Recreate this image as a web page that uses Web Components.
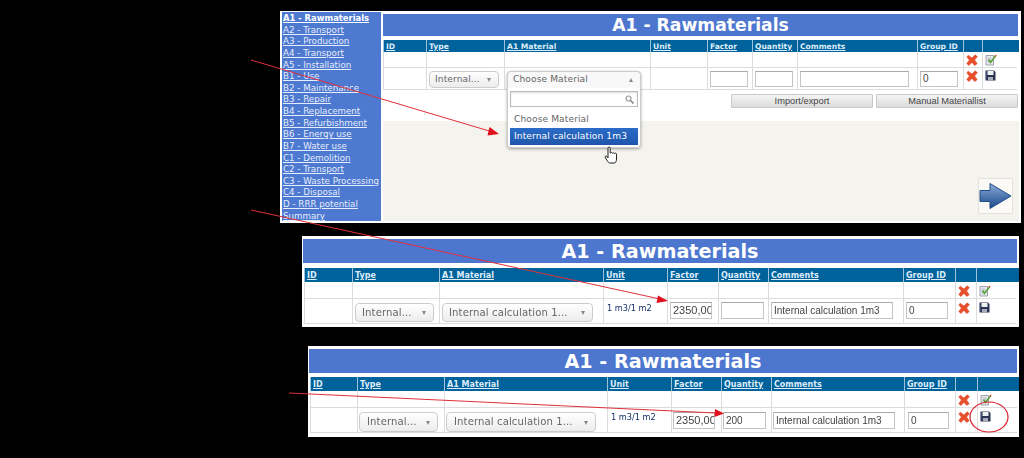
<!DOCTYPE html>
<html><head><meta charset="utf-8"><title>A1 - Rawmaterials</title>
<style>
html,body{margin:0;background:#000;width:1024px;height:458px;overflow:hidden}
body{font-family:"DejaVu Sans",sans-serif;position:relative}
</style></head><body>
<script>
const def=(name,css,html)=>{customElements.define(name,class extends HTMLElement{
  constructor(){super();this.attachShadow({mode:'open'});}
  connectedCallback(){if(this.shadowRoot.firstChild)return;this.shadowRoot.innerHTML=`<style>${css}</style>${typeof html==='function'?html(this):html}`;}
});};

def('rm-page',`:host{display:flex;flex-direction:column;align-items:flex-start;padding-top:11px;filter:blur(.35px)}`,`<slot></slot>`);

def('rm-panel',`:host{display:block;box-sizing:border-box;background:#fff;margin-left:var(--x);margin-top:var(--mt,0);width:var(--w);height:var(--h);padding:var(--pad)}`,`<slot></slot>`);

def('rm-split',`:host{display:grid;grid-template-columns:99px 636px;column-gap:2px;height:209px}`,`<slot></slot>`);

def('rm-nav',`:host{display:block;box-sizing:border-box;background:#4e79d0;padding:1px 0 0 1px;height:209px;font:8.7px/11.62px "DejaVu Sans",sans-serif}
::slotted(a){display:block;color:#e6eefc;white-space:nowrap}
::slotted(a.on){color:#fff;font-weight:bold;font-size:8.4px}`,`<slot></slot>`);

def('rm-main',`:host{display:flex;flex-direction:column;height:209px;padding-top:2px;box-sizing:border-box}
.top{background:#fff;padding-bottom:13px}
.fill{flex:1;background:#f4f3ee;display:flex;justify-content:flex-end;align-items:flex-end;padding:0 6px 7px 0}`,
`<div class="top"><slot></slot></div><div class="fill"><slot name="fill"></slot></div>`);

def('rm-title',`:host{display:flex;align-items:center;justify-content:center;box-sizing:border-box;padding-top:1px;background:#4d77cf;color:#fff;font:bold var(--ts,17.2px)/1 "DejaVu Sans",sans-serif;height:var(--th,22px);width:var(--tw,635px);margin-bottom:var(--tg,4px)}`,`<slot></slot>`);

def('rm-table',`:host{display:block;margin-left:var(--tx,0)}`,`<slot></slot>`);

def('rm-row',`:host{display:grid;grid-template-columns:var(--cols);height:var(--rh,16px);box-sizing:border-box}
:host([head]){background:#00629b;height:var(--hh,12px);font:bold var(--hs,8px)/1 "DejaVu Sans",sans-serif;color:#dcecfa;text-decoration:underline}
:host([last]){height:var(--lh,22px)}`,`<slot></slot>`);

def('rm-cell',`:host{display:flex;box-sizing:border-box;align-items:flex-start;border-left:1px solid #dcdcdc;border-bottom:1px solid #dcdcdc;padding:var(--cp,2px 0 0 2px);min-width:0;color:#10306a;font-size:var(--us,8px);line-height:1}
:host([th]){border-left:1px solid #9fc3da;border-bottom:0;padding:1px 0 0 2px;align-items:center;font-size:inherit;color:inherit}
:host([icon]){padding:var(--ip,1px 0 0 2px)}
:host([unit]){padding:var(--up,5px 0 0 3px)}`,`<slot></slot>`);

def('rm-select',`:host{display:block;position:relative;box-sizing:border-box;margin-top:var(--sm,0);height:var(--sh,17px);font:var(--ss,9.1px)/1 "DejaVu Sans",sans-serif;color:#666;letter-spacing:.1px}
.box{box-sizing:border-box;height:100%;border:1px solid #ccc;border-radius:4px;background:linear-gradient(#fff,#ececec);display:flex;align-items:center;padding:1px 7px 0 var(--sp,5px);justify-content:space-between;white-space:nowrap}
.t{overflow:hidden}
.a{width:0;height:0;border-left:2.5px solid transparent;border-right:2.5px solid transparent;border-top:4px solid #888;flex:none}
:host([open]) .a{border-top:0;border-bottom:4px solid #888}
:host([open]) .box{position:relative;z-index:1;border-radius:4px 4px 0 0;border-color:#ccc #ccc transparent;background:#f8f8f8}
.pop{position:absolute;left:0;top:0;right:0;height:77px;box-sizing:border-box;border:1px solid #ccc;border-radius:4px;box-shadow:0 1px 3px rgba(0,0,0,.35)}
.menu{position:absolute;left:0;right:0;top:16px;bottom:0;background:#fff;padding:3px 2px 2px 2px;border-radius:0 0 4px 4px}
.search{box-sizing:border-box;height:16px;border:1px solid #bbb;display:flex;justify-content:flex-end;align-items:center;padding-right:3px;box-shadow:inset 0 1px 2px #ddd}
.o{box-sizing:border-box;height:17px;padding:1px 0 0 4px;display:flex;align-items:center;white-space:nowrap}
.o.c{margin-top:4px}
.o.h{background:linear-gradient(#2a6cc8,#1f56ab);color:#fff}`,
h=>(h.hasAttribute('open')?`<div class="pop"><div class="menu"><div class="search"><svg width="9" height="9" viewBox="0 0 9 9"><circle cx="3.5" cy="3.5" r="2.5" fill="none" stroke="#999" stroke-width="1.2"/><path d="M5.5 5.5L8.5 8.5" stroke="#888" stroke-width="1.6"/></svg></div><div class="o c"><slot name="o1"></slot></div><div class="o h"><slot name="o2"></slot></div></div></div>`:'')+`<div class="box"><span class="t"><slot></slot></span><span class="a"></span></div>`);

def('rm-input',`:host{display:flex;align-items:center;box-sizing:border-box;height:var(--ih,16px);border:1px solid #c4c4c4;border-top-color:#aaa;background:#fff;font:var(--is,10px)/1 "Liberation Sans",sans-serif;color:#444;overflow:hidden;white-space:nowrap;padding:0 0 0 2px}`,`<slot></slot>`);

def('rm-btn',`:host{display:flex;align-items:center;justify-content:center;box-sizing:border-box;width:142px;height:14px;padding-top:1px;border:1px solid #c8c8c8;border-radius:1px;background:linear-gradient(#f4f4f4,#dcdcdc);font:9.3px/1 "Liberation Sans",sans-serif;color:#444}`,`<slot></slot>`);

def('rm-btns',`:host{display:flex;justify-content:flex-end;gap:3px;margin:4px 1px 0 0}`,`<slot></slot>`);

const ICONS={
x:`<svg width="12" height="12" viewBox="0 0 12 12"><path d="M2.200 1.200L6 4 9 .8 11.400 2.600 8.600 6 11.200 9.800 8.600 11.400 6 8.400 2.800 11.600.8 9.600 3.400 6 .8 3Z" fill="#e8502c" stroke="#d9401f" stroke-width=".5" stroke-linejoin="round"/></svg>`,
edit:`<svg width="12" height="12" viewBox="0 0 12 12"><path d="M1 1.500h7.500v9.500H1Z" fill="#e8e8ee" stroke="#8a8f9e" stroke-width=".8"/><path d="M2.500 4h4M2.500 6h4M2.500 8h3" stroke="#9aa" stroke-width=".7"/><path d="M3.500 5.500L5.500 8.500 10.500 2" fill="none" stroke="#58a03a" stroke-width="1.600"/><path d="M9.500 1.500L11.500.5 11 3Z" fill="#c8402c"/></svg>`,
save:`<svg width="11" height="11" viewBox="0 0 11 11"><path d="M.5.5h8.500l1.500 1.500v8.500H.5Z" fill="#2b3350"/><rect x="2.500" y="1" width="6" height="4" fill="#eef0f2"/><rect x="3" y="7" width="5" height="3.500" fill="#a8aebb"/><path d="M.8 1v9" stroke="#7c8bb0" stroke-width=".8"/></svg>`};
def('rm-icon',`:host{display:block;line-height:0;margin-left:var(--im,0)}`,h=>ICONS[h.getAttribute('name')]);

def('rm-next',`:host{display:block;box-sizing:border-box;width:35px;height:36px;border:1px solid #e4e2dc;background:#fbfaf6;line-height:0}`,
`<svg width="33" height="34" viewBox="0 0 33 34"><defs><linearGradient id="g" x1="0" y1="0" x2="0" y2="1"><stop offset="0" stop-color="#8fb0da"/><stop offset=".55" stop-color="#4a74ad"/><stop offset="1" stop-color="#1e4a85"/></linearGradient></defs><path d="M1 11.500H11V4.500L32 17 11 29.500V22.500H1Z" fill="url(#g)" stroke="#244f88" stroke-width="1" stroke-linejoin="round"/></svg>`);

def('rm-notes',`:host{display:block;position:absolute;left:0;top:0;width:1024px;height:458px;pointer-events:none;filter:blur(.2px)}
svg{display:block}`,
`<svg width="1024" height="458" viewBox="0 0 1024 458" fill="none">
<path d="M251 60L491 131.500" stroke="#e0303a" stroke-width="1"/><path d="M499 134L489.500 127 487.500 135.500Z" fill="#e2101c"/>
<path d="M251 210L660 299" stroke="#e0303a" stroke-width="1"/><path d="M668 301L658 295.500 656.500 303Z" fill="#e2101c"/>
<path d="M289 393L716 413" stroke="#e0303a" stroke-width="1"/><path d="M724 413.500L715 409 714.500 417Z" fill="#e2101c"/>
<ellipse cx="989" cy="417" rx="19" ry="15" stroke="#d81e28" stroke-width="1.200"/>
<path d="M608 158V148.200a1.100 1.100 0 0 1 2.200 0V153h.3a1.100 1.100 0 0 1 2 .3 1.100 1.100 0 0 1 2 .3 1.100 1.100 0 0 1 2 .6V159c0 2-1 4-2 4H609.500C608.500 163 607.500 161 605.500 158 604.600 156.500 605.500 155.600 606.600 156.200Z" fill="#fff" stroke="#222" stroke-width="1"/>
</svg>`);
</script>

<rm-page>
  <rm-panel style="--x:280px;--w:741px;--h:212px;--pad:1px 0 0 2px">
    <rm-split>
      <rm-nav>
        <a href="#" class="on">A1 - Rawmaterials</a>
        <a href="#">A2 - Transport</a>
        <a href="#">A3 - Production</a>
        <a href="#">A4 - Transport</a>
        <a href="#">A5 - Installation</a>
        <a href="#">B1 - Use</a>
        <a href="#">B2 - Maintenance</a>
        <a href="#">B3 - Repair</a>
        <a href="#">B4 - Replacement</a>
        <a href="#">B5 - Refurbishment</a>
        <a href="#">B6 - Energy use</a>
        <a href="#">B7 - Water use</a>
        <a href="#">C1 - Demolition</a>
        <a href="#">C2 - Transport</a>
        <a href="#">C3 - Waste Processing</a>
        <a href="#">C4 - Disposal</a>
        <a href="#">D - RRR potential</a>
        <a href="#">Summary</a>
      </rm-nav>
      <rm-main>
        <rm-title>A1 - Rawmaterials</rm-title>
        <rm-table style="--cols:43px 78px 146px 57px 45px 45px 120px 46px 19px 35px;--hs:7.6px;--rh:16px;--hh:12px;--lh:22px;--cp:3px 0 0 2px;--ih:16px;--ip:2px 0 0 2px">
          <rm-row head><rm-cell th>ID</rm-cell><rm-cell th>Type</rm-cell><rm-cell th>A1 Material</rm-cell><rm-cell th>Unit</rm-cell><rm-cell th>Factor</rm-cell><rm-cell th>Quantity</rm-cell><rm-cell th>Comments</rm-cell><rm-cell th>Group ID</rm-cell><rm-cell th></rm-cell><rm-cell th></rm-cell></rm-row>
          <rm-row><rm-cell></rm-cell><rm-cell></rm-cell><rm-cell></rm-cell><rm-cell></rm-cell><rm-cell></rm-cell><rm-cell></rm-cell><rm-cell></rm-cell><rm-cell></rm-cell><rm-cell icon><rm-icon name="x"></rm-icon></rm-cell><rm-cell icon><rm-icon name="edit"></rm-icon></rm-cell></rm-row>
          <rm-row last><rm-cell></rm-cell><rm-cell><rm-select style="width:70px">Internal...</rm-select></rm-cell><rm-cell><rm-select open style="width:134px">Choose Material<span slot="o1">Choose Material</span><span slot="o2">Internal calculation 1m3</span></rm-select></rm-cell><rm-cell></rm-cell><rm-cell><rm-input style="width:38px"></rm-input></rm-cell><rm-cell><rm-input style="width:38px"></rm-input></rm-cell><rm-cell><rm-input style="width:109px"></rm-input></rm-cell><rm-cell><rm-input style="width:38px">0</rm-input></rm-cell><rm-cell icon><rm-icon name="x"></rm-icon></rm-cell><rm-cell icon><rm-icon name="save"></rm-icon></rm-cell></rm-row>
        </rm-table>
        <rm-btns><rm-btn>Import/export</rm-btn><rm-btn>Manual Materiallist</rm-btn></rm-btns>
        <rm-next slot="fill"></rm-next>
      </rm-main>
    </rm-split>
  </rm-panel>

  <rm-panel style="--x:302px;--mt:13px;--w:717px;--h:91px;--pad:3px 0 0 1px">
    <rm-title style="--tw:714px;--th:24px;--tg:5px;--ts:19.2px">A1 - Rawmaterials</rm-title>
    <rm-table style="--tx:1px;--cols:48px 87px 164px 64px 51px 50px 135px 52px 21px 40px;--hs:8px;--rh:17px;--hh:14px;--lh:25px;--cp:3px 0 0 2px;--ih:17px;--sh:19px;--sm:1px;--ss:10.1px;--sp:6px;--is:10px;--ip:3px 0 0 2px;--us:8.2px;--up:5px 0 0 3px">
      <rm-row head><rm-cell th>ID</rm-cell><rm-cell th>Type</rm-cell><rm-cell th>A1 Material</rm-cell><rm-cell th>Unit</rm-cell><rm-cell th>Factor</rm-cell><rm-cell th>Quantity</rm-cell><rm-cell th>Comments</rm-cell><rm-cell th>Group ID</rm-cell><rm-cell th></rm-cell><rm-cell th></rm-cell></rm-row>
      <rm-row><rm-cell></rm-cell><rm-cell></rm-cell><rm-cell></rm-cell><rm-cell></rm-cell><rm-cell></rm-cell><rm-cell></rm-cell><rm-cell></rm-cell><rm-cell></rm-cell><rm-cell icon><rm-icon name="x"></rm-icon></rm-cell><rm-cell icon><rm-icon name="edit"></rm-icon></rm-cell></rm-row>
      <rm-row last><rm-cell></rm-cell><rm-cell><rm-select style="width:79px">Internal...</rm-select></rm-cell><rm-cell><rm-select style="width:151px">Internal calculation 1...</rm-select></rm-cell><rm-cell unit>1 m3/1 m2</rm-cell><rm-cell><rm-input style="width:42px;--is:11px">2350,000</rm-input></rm-cell><rm-cell><rm-input style="width:43px"></rm-input></rm-cell><rm-cell><rm-input style="width:122px">Internal calculation 1m3</rm-input></rm-cell><rm-cell><rm-input style="width:42px">0</rm-input></rm-cell><rm-cell icon><rm-icon name="x"></rm-icon></rm-cell><rm-cell icon><rm-icon name="save"></rm-icon></rm-cell></rm-row>
    </rm-table>
  </rm-panel>

  <rm-panel style="--x:308px;--mt:19px;--w:711px;--h:91px;--pad:3px 0 0 1px">
    <rm-title style="--tw:708px;--th:24px;--tg:4px;--ts:19.2px">A1 - Rawmaterials</rm-title>
    <rm-table style="--tx:1px;--cols:47px 87px 163px 64px 50px 50px 133px 51px 22px 40px;--hs:8px;--rh:17px;--hh:14px;--lh:25px;--cp:4px 0 0 1px;--ih:17px;--sh:20px;--ss:10.1px;--sp:7px;--is:10px;--ip:3px 0 0 2px;--us:8.2px;--up:5px 0 0 3px">
      <rm-row head><rm-cell th>ID</rm-cell><rm-cell th>Type</rm-cell><rm-cell th>A1 Material</rm-cell><rm-cell th>Unit</rm-cell><rm-cell th>Factor</rm-cell><rm-cell th>Quantity</rm-cell><rm-cell th>Comments</rm-cell><rm-cell th>Group ID</rm-cell><rm-cell th></rm-cell><rm-cell th></rm-cell></rm-row>
      <rm-row><rm-cell></rm-cell><rm-cell></rm-cell><rm-cell></rm-cell><rm-cell></rm-cell><rm-cell></rm-cell><rm-cell></rm-cell><rm-cell></rm-cell><rm-cell></rm-cell><rm-cell icon><rm-icon name="x"></rm-icon></rm-cell><rm-cell icon><rm-icon name="edit"></rm-icon></rm-cell></rm-row>
      <rm-row last><rm-cell></rm-cell><rm-cell><rm-select style="width:79px">Internal...</rm-select></rm-cell><rm-cell><rm-select style="width:150px">Internal calculation 1...</rm-select></rm-cell><rm-cell unit>1 m3/1 m2</rm-cell><rm-cell><rm-input style="width:42px;--is:11px">2350,000</rm-input></rm-cell><rm-cell><rm-input style="width:43px">200</rm-input></rm-cell><rm-cell><rm-input style="width:122px">Internal calculation 1m3</rm-input></rm-cell><rm-cell><rm-input style="width:41px;margin-left:2px">0</rm-input></rm-cell><rm-cell icon><rm-icon name="x"></rm-icon></rm-cell><rm-cell icon><rm-icon name="save"></rm-icon></rm-cell></rm-row>
    </rm-table>
  </rm-panel>
</rm-page>
<rm-notes></rm-notes>
</body></html>
